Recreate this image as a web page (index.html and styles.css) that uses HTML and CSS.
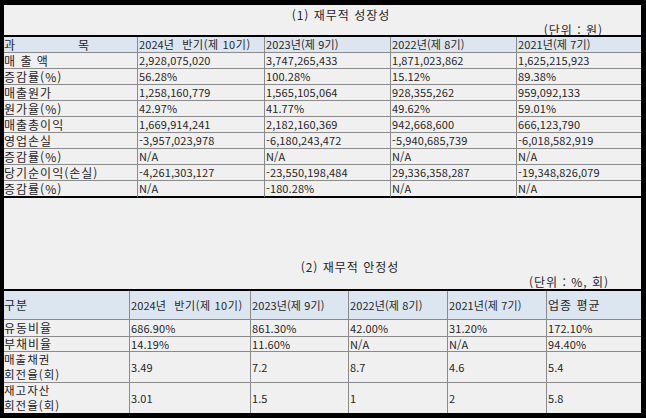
FILE: index.html
```html
<!DOCTYPE html>
<html lang="ko">
<head>
<meta charset="utf-8">
<title>재무적 성장성 / 안정성</title>
<link rel="stylesheet" href="styles.css">
</head>
<body>
<div class="frame">
  <div class="title t1">(1) 재무적 성장성</div>
  <div class="unit u1">(단위 : 원)</div>
  <table class="tbl tbl1">
    <colgroup>
      <col class="c1a"><col class="c1b"><col class="c1c"><col class="c1d"><col class="c1e">
    </colgroup>
    <tr class="head">
      <td class="lbl"><span>과</span><span class="mok">목</span></td>
      <td>2024년 <span class="half">반기(제 10기)</span></td>
      <td>2023년(제 9기)</td>
      <td>2022년(제 8기)</td>
      <td>2021년(제 7기)</td>
    </tr>
    <tr><td class="lbl">매 출 액</td><td>2,928,075,020</td><td>3,747,265,433</td><td>1,871,023,862</td><td>1,625,215,923</td></tr>
    <tr><td class="lbl">증감률(%)</td><td>56.28%</td><td>100.28%</td><td>15.12%</td><td>89.38%</td></tr>
    <tr><td class="lbl">매출원가</td><td>1,258,160,779</td><td>1,565,105,064</td><td>928,355,262</td><td>959,092,133</td></tr>
    <tr><td class="lbl">원가율(%)</td><td>42.97%</td><td>41.77%</td><td>49.62%</td><td>59.01%</td></tr>
    <tr><td class="lbl">매출총이익</td><td>1,669,914,241</td><td>2,182,160,369</td><td>942,668,600</td><td>666,123,790</td></tr>
    <tr><td class="lbl">영업손실</td><td>-3,957,023,978</td><td>-6,180,243,472</td><td>-5,940,685,739</td><td>-6,018,582,919</td></tr>
    <tr><td class="lbl">증감률(%)</td><td>N/A</td><td>N/A</td><td>N/A</td><td>N/A</td></tr>
    <tr><td class="lbl">당기순이익(손실)</td><td>-4,261,303,127</td><td>-23,550,198,484</td><td>29,336,358,287</td><td>-19,348,826,079</td></tr>
    <tr class="last"><td class="lbl">증감률(%)</td><td>N/A</td><td>-180.28%</td><td>N/A</td><td>N/A</td></tr>
  </table>

  <div class="title t2">(2) 재무적 안정성</div>
  <div class="unit u2">(단위 : %, 회)</div>
  <table class="tbl tbl2">
    <colgroup>
      <col class="c2a"><col class="c2b"><col class="c2c"><col class="c2d"><col class="c2e"><col class="c2f">
    </colgroup>
    <tr class="head2">
      <td class="lbl">구분</td>
      <td>2024년 <span class="half">반기(제 10기)</span></td>
      <td>2023년(제 9기)</td>
      <td>2022년(제 8기)</td>
      <td>2021년(제 7기)</td>
      <td class="lbl">업종 평균</td>
    </tr>
    <tr class="r17"><td class="lbl">유동비율</td><td>686.90%</td><td>861.30%</td><td>42.00%</td><td>31.20%</td><td>172.10%</td></tr>
    <tr class="r15"><td class="lbl">부채비율</td><td>14.19%</td><td>11.60%</td><td>N/A</td><td>N/A</td><td>94.40%</td></tr>
    <tr class="r2"><td class="lbl">매출채권<br>회전율(회)</td><td>3.49</td><td>7.2</td><td>8.7</td><td>4.6</td><td>5.4</td></tr>
    <tr class="r2"><td class="lbl">재고자산<br>회전율(회)</td><td>3.01</td><td>1.5</td><td>1</td><td>2</td><td>5.8</td></tr>
  </table>
</div>
</body>
</html>
```

FILE: styles.css
```css
html, body {
  margin: 0;
  padding: 0;
  background: #000;
}
body {
  width: 646px;
  height: 418px;
  overflow: hidden;
}
.frame {
  margin: 5px 5px 0 4px;
  width: 637px;
  height: 408px;
  overflow: hidden;
  background: #f0f0f0;
  color: #262626;
  font-family: "Noto Sans CJK KR", "Noto Sans", sans-serif;
  font-size: 12px;
}
.title {
  text-align: center;
  white-space: nowrap;
  letter-spacing: 1px;
}
.t1 {
  height: 19px;
  line-height: 19px;
  padding-left: 37px;
}
.t2 {
  margin-top: 61px;
  height: 16px;
  line-height: 16px;
  padding-left: 55px;
}
.unit {
  text-align: right;
  white-space: nowrap;
  letter-spacing: 1px;
}
.u1 {
  height: 11px;
  line-height: 11px;
  padding-right: 38px;
}
.u2 {
  height: 14px;
  line-height: 14px;
  padding-right: 32px;
}
.tbl {
  border-collapse: separate;
  border-spacing: 0;
  table-layout: fixed;
  width: 637px;
  border-top: 2px solid #000;
}
.tbl td {
  padding: 0 0 0 1px;
  border-bottom: 1px solid #8a8a8a;
  border-left: 1px solid #8a8a8a;
  line-height: 15px;
  font-size: 11px;
  white-space: nowrap;
  overflow: hidden;
  vertical-align: middle;
  letter-spacing: 0.1px;
}
.tbl td:first-child {
  border-left: 0;
  padding-left: 0;
}
.tbl td.lbl {
  font-size: 12px;
  letter-spacing: 1px;
  overflow: visible;
}
.head td, .head2 td {
  background: #dce6f0;
}
.half {
  margin-left: 5px;
  letter-spacing: 0.6px;
}
.mok {
  margin-left: 62px;
}
.tbl1 .last td {
  border-bottom: 2px solid #000;
}
.c1a { width: 133px; }
.c1b { width: 127px; }
.c1c { width: 126px; }
.c1d { width: 126px; }
.c1e { width: 125px; }

.c2a { width: 125px; }
.c2b { width: 121px; }
.c2c { width: 98px; }
.c2d { width: 99px; }
.c2e { width: 99px; }
.c2f { width: 95px; }

.head2 td { line-height: 28px; }
.r17 td { line-height: 16px; }
.r15 td { line-height: 14px; }
.r2 td { line-height: 15px; height: 30px; }
.r2 td.lbl { font-size: 11.5px; }
```
